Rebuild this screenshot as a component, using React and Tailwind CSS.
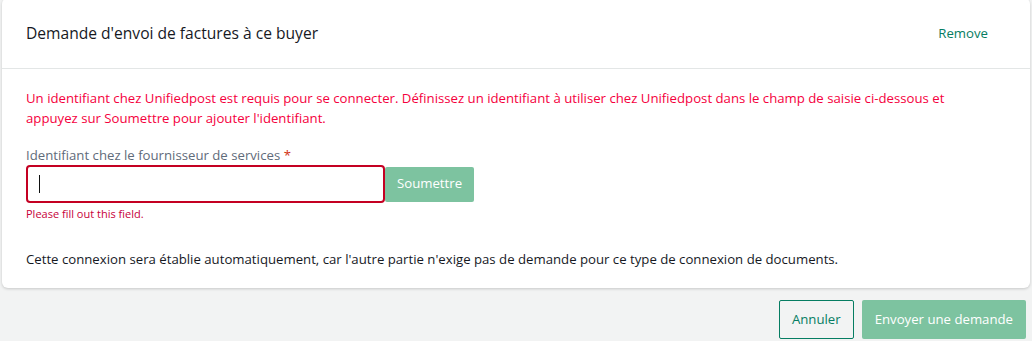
export default function App() {
  return (
    <div className="w-[1032px] h-[341px] bg-[#f2f3f3] overflow-hidden" style={{ fontFamily: '"Open Sans", "Noto Sans", sans-serif' }}>
      <div className="mx-[2px] -mt-[2px] bg-white rounded-md shadow-[0_1px_3px_rgba(0,0,0,0.18)]">
        {/* Header */}
        <div className="flex items-center justify-between h-[71px] pl-[24px] pr-[42px] pt-[2px] border-b border-[#e3e6e6]">
          <h2 className="text-[15.6px] text-[#16191f]">Demande d'envoi de factures à ce buyer</h2>
          <button className="text-[13.2px] text-[#067d62]">Remove</button>
        </div>

        {/* Body */}
        <div className="px-[24px] pt-[19px] pb-[19px]">
          <p className="text-[13.2px] leading-[20px] text-[#f5003d] max-w-[930px]">
            Un identifiant chez Unifiedpost est requis pour se connecter. Définissez un identifiant à utiliser chez Unifiedpost dans le champ de saisie ci-dessous et appuyez sur Soumettre pour ajouter l'identifiant.
          </p>

          <label className="block mt-[18px] text-[13.2px] leading-[18px] text-[#5f6b7a]">
            Identifiant chez le fournisseur de services <span className="text-[#d13212]">*</span>
          </label>
          <div className="flex items-center mt-[1px]">
            <div className="w-[359px] h-[38px] border-2 border-[#c40022] rounded-[4px] flex items-center pl-[11px]">
              <span className="w-[1px] h-[18px] bg-[#0f1111]"></span>
            </div>
            <button className="h-[35px] w-[89px] bg-[#7dc3a0] text-white text-[13.2px] rounded-[2px]">Soumettre</button>
          </div>
          <p className="mt-[4px] text-[11px] leading-[14px] text-[#c7003a]">Please fill out this field.</p>

          <p className="mt-[28px] text-[13.2px] leading-[20px] text-[#16191f]">
            Cette connexion sera établie automatiquement, car l'autre partie n'exige pas de demande pour ce type de connexion de documents.
          </p>
        </div>
      </div>

      {/* Footer buttons */}
      <div className="flex justify-end gap-[8px] pr-[6px] mt-[12px]">
        <button className="h-[39px] px-[12px] border border-[#067d62] text-[#067d62] text-[13.2px] rounded-[2px] bg-transparent">Annuler</button>
        <button className="h-[39px] px-[13px] bg-[#7dc3a0] text-white text-[13.2px] rounded-[2px]">Envoyer une demande</button>
      </div>
    </div>
  )
}
